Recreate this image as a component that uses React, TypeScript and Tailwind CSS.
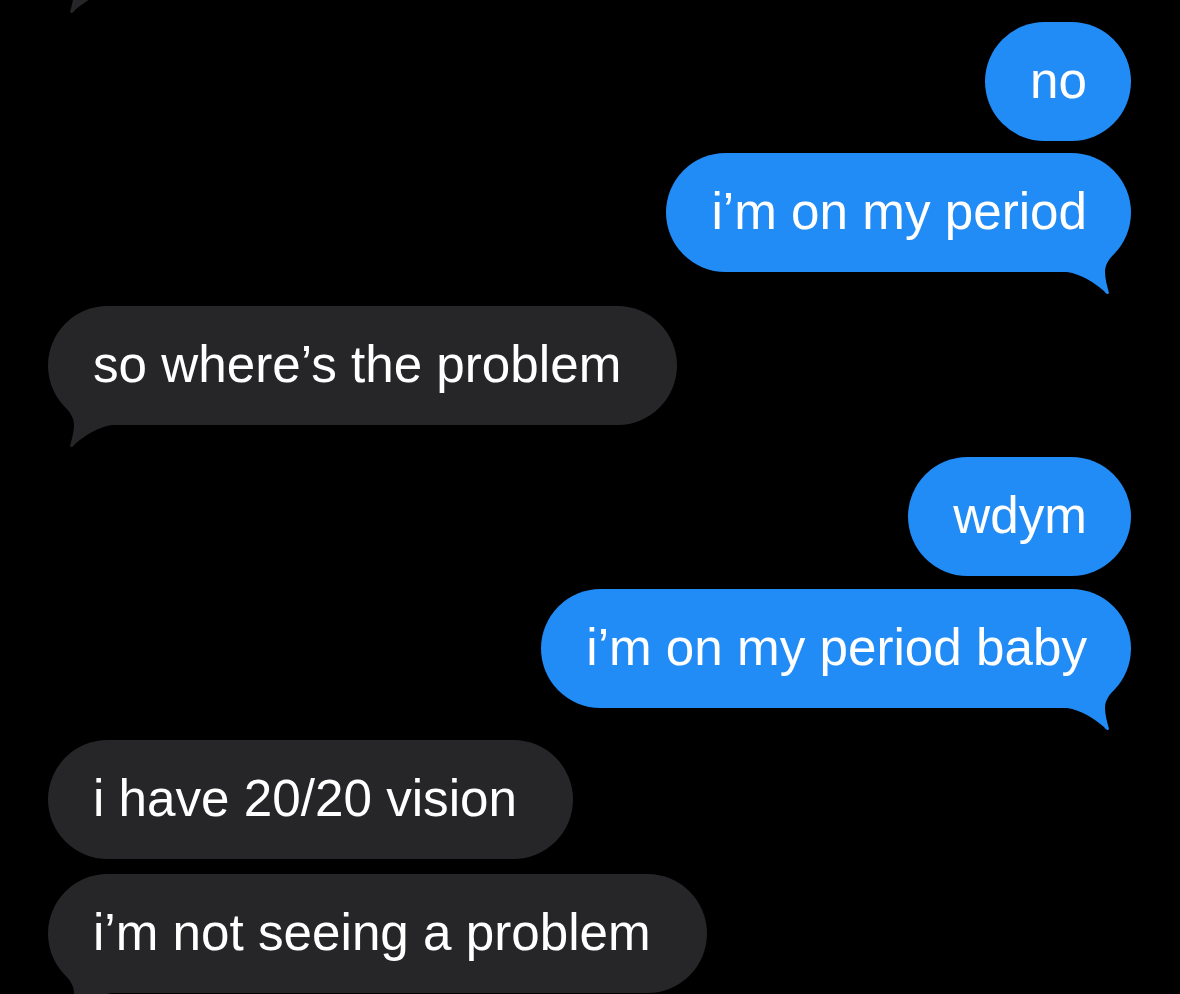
import React from 'react';

type Msg = { id: number; text: string; mine: boolean; tail?: boolean; gap: number };

const messages: Msg[] = [
  { id: 1, text: 'no', mine: true, gap: 31 },
  { id: 2, text: 'i’m on my period', mine: true, tail: true, gap: 12 },
  { id: 3, text: 'so where’s the problem', mine: false, tail: true, gap: 34 },
  { id: 4, text: 'wdym', mine: true, gap: 32 },
  { id: 5, text: 'i’m on my period baby', mine: true, tail: true, gap: 13 },
  { id: 6, text: 'i have 20/20 vision', mine: false, gap: 32 },
  { id: 7, text: 'i’m not seeing a problem', mine: false, tail: true, gap: 15 },
];

// tail hanging off the bottom corner of a bubble; received bubbles get it mirrored
const Tail = ({ mine }: { mine: boolean }) => (
  <svg
    className={`absolute bottom-[-24px] ${
      mine ? 'right-[-2px] text-[#218bf6]' : 'left-[-2px] -scale-x-100 text-[#262629]'
    }`}
    width="66"
    height="84"
    viewBox="0 0 66 84"
  >
    <path
      d="M0 60 C14 62 28 71 37 79 C39 82 41 83 42 81 C40 74 38 66 38 60 C38 52 43 46 48.5 40 L30 30 L0 30 Z"
      fill="currentColor"
    />
  </svg>
);

const Bubble = ({ msg }: { msg: Msg }) => (
  <div
    className={`flex ${msg.mine ? 'justify-end' : 'justify-start'}`}
    style={{ marginTop: msg.gap }}
  >
    <div
      className={`relative h-[119px] rounded-full flex items-center ${
        msg.mine ? 'bg-[#218bf6] pl-[45px] pr-[44px]' : 'bg-[#262629] pl-[45px] pr-[56px]'
      }`}
    >
      {msg.tail && <Tail mine={msg.mine} />}
      <span className="relative text-white text-[51.2px] leading-none whitespace-nowrap pb-[1px]">
        {msg.text}
      </span>
    </div>
  </div>
);

export default function App() {
  return (
    <div
      className="w-[1180px] h-[994px] bg-black overflow-hidden pl-[48px] pr-[49px]"
      style={{ fontFamily: '"Liberation Sans", Arial, sans-serif' }}
    >
      {/* previous message, scrolled off the top */}
      <div className="flex justify-start mt-[-128px]">
        <div className="relative h-[119px] w-[420px] rounded-full bg-[#262629]">
          <Tail mine={false} />
        </div>
      </div>
      {messages.map(m => (
        <Bubble key={m.id} msg={m} />
      ))}
    </div>
  );
}
